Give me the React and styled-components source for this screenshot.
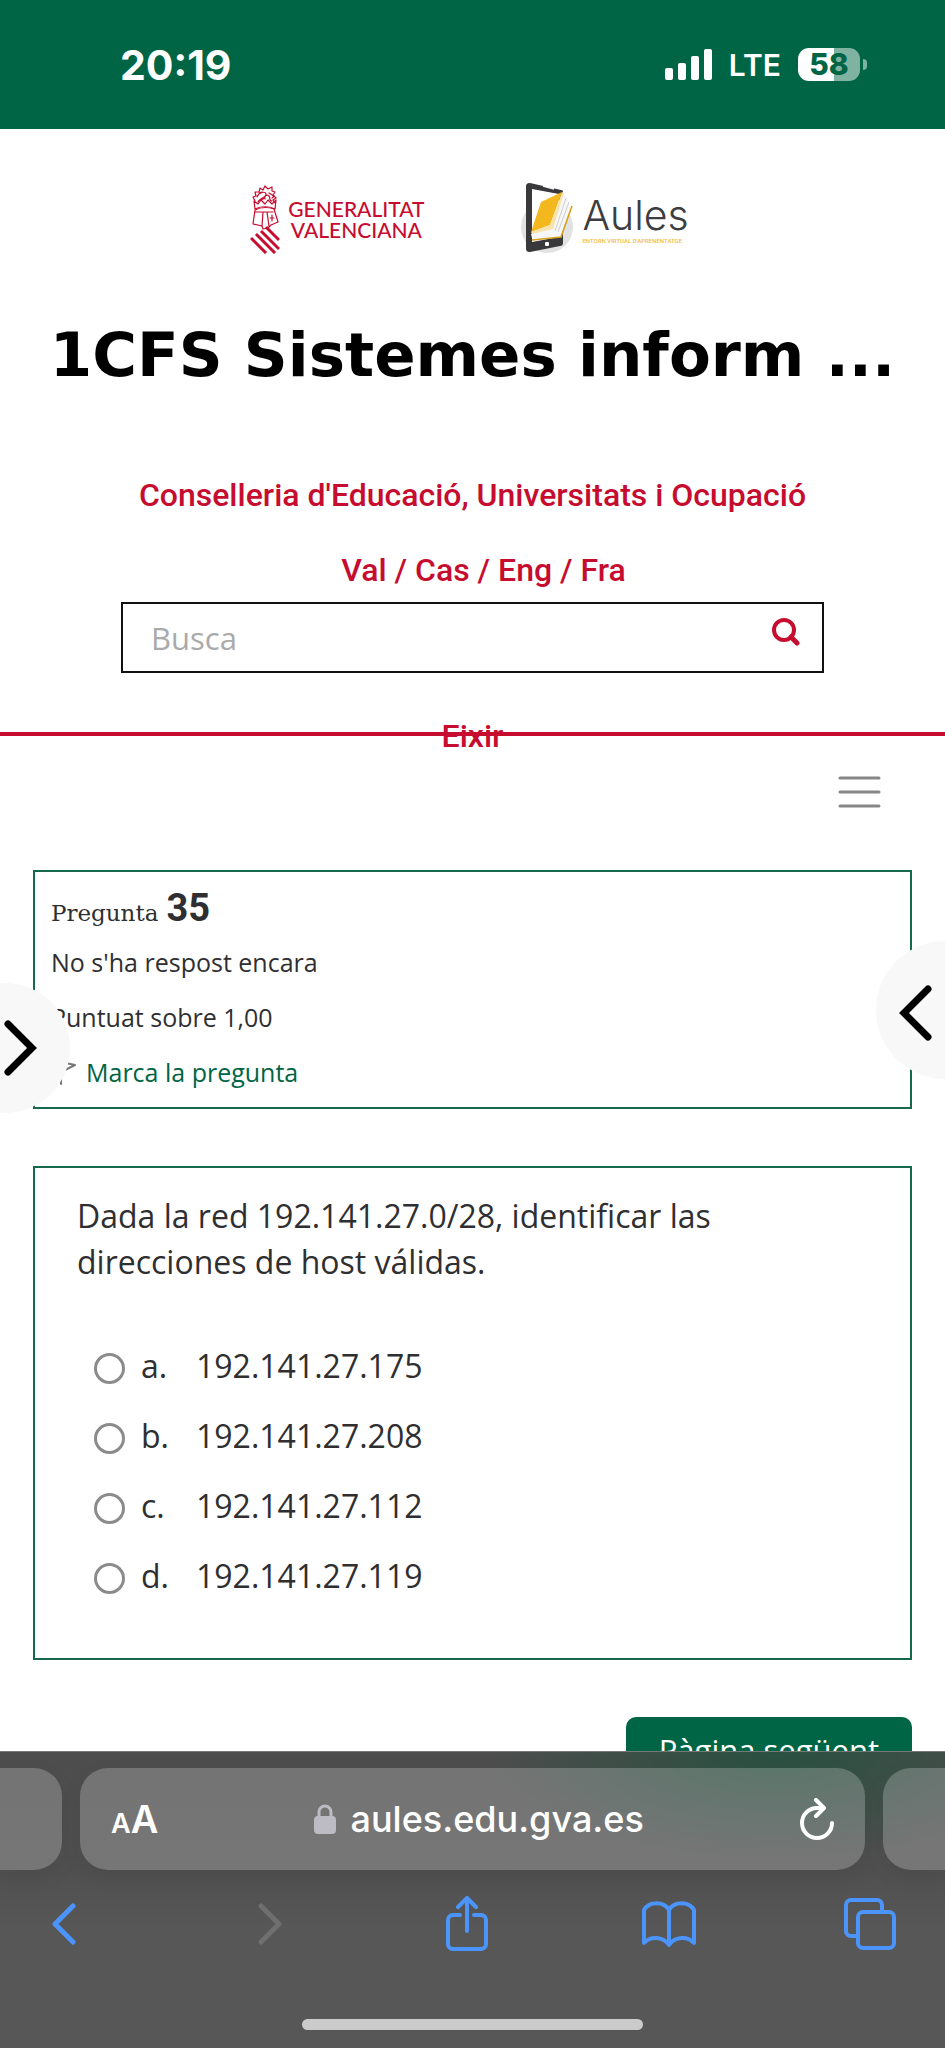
import React from "react";
import styled, { createGlobalStyle } from "styled-components";

const green = "#006544";
const red = "#c60c2f";

const GlobalStyle = createGlobalStyle`
  * { box-sizing: border-box; }
  body { margin: 0; background: #fff; font-family: "Open Sans", sans-serif; color: #2f2f31; }
  h1, h2, p, ul, ol, fieldset { margin: 0; padding: 0; }
  button, input { font: inherit; color: inherit; }
  button { border: 0; background: none; padding: 0; cursor: pointer; }
  a { color: inherit; text-decoration: none; }
  svg { display: block; flex: none; }
`;

const Screen = styled.div`
  display: flex;
  flex-direction: column;
  height: 100vh;
  overflow: hidden;
`;

const StatusBar = styled.header`
  display: flex;
  justify-content: space-between;
  align-items: center;
  flex: none;
  height: 129px;
  padding: 0 78px 0 120px;
  background: ${green};
  color: #fff;
  font-family: Inter, sans-serif;
`;

const Clock = styled.time`
  font-size: 41px;
  font-weight: 700;
`;

const StatusItems = styled.div`
  display: flex;
  align-items: center;
  gap: 17px;
`;

const Network = styled.span`
  font-size: 30px;
  font-weight: 600;
`;

const Battery = styled.div`
  display: flex;
  align-items: center;
  gap: 3px;
`;

const BatteryBody = styled.span`
  width: 62px;
  height: 33px;
  border-radius: 11px;
  background: linear-gradient(to right, #fff 58%, #80b2a1 58%);
  color: ${green};
  font-size: 30px;
  font-weight: 800;
  line-height: 33px;
  text-align: center;
`;

const BatteryTip = styled.span`
  width: 4px;
  height: 11px;
  border-radius: 0 6px 6px 0;
  background: #80b2a1;
`;

const Page = styled.div`
  position: relative;
  flex: 1;
  min-height: 0;
  overflow: hidden;
`;

const SiteHeader = styled.div`
  display: flex;
  flex-direction: column;
  align-items: center;
  padding-top: 52px;
  border-bottom: 4px solid ${red};
  color: ${red};
  font-family: Roboto, sans-serif;
  font-size: 32px;
  font-weight: 500;
  line-height: 40px;
`;

const Logos = styled.div`
  display: flex;
  align-items: center;
  gap: 96px;
  height: 76px;
  padding-right: 6px;
`;

const Logo = styled.a`
  display: flex;
  align-items: center;
  gap: 8px;
`;

const GvaName = styled.span`
  font-family: Lato, sans-serif;
  font-size: 21px;
  line-height: 21px;
  text-align: center;
`;

const AulesName = styled.span`
  display: flex;
  flex-direction: column;
  color: #3d3d3f;
  font-family: Inter, sans-serif;
  font-size: 41px;
  font-weight: 300;
  line-height: 44px;
`;

const AulesTagline = styled.small`
  color: #f0bd45;
  font-family: Roboto, sans-serif;
  font-size: 6px;
  font-weight: 500;
  line-height: 8px;
`;

const CourseTitle = styled.h1`
  margin-top: 58px;
  color: #000;
  font-family: "DejaVu Sans", sans-serif;
  font-size: 61px;
  font-weight: 700;
  line-height: 80px;
  white-space: nowrap;
`;

const Department = styled.a`
  margin-top: 80px;
`;

const Languages = styled.nav`
  margin-top: 35px;
  padding-left: 22px;
`;

const SearchForm = styled.form`
  display: flex;
  align-items: center;
  width: calc(100% - 242px);
  height: 71px;
  margin-top: 12px;
  padding: 0 22px 0 26px;
  border: 2px solid #111;
`;

const SearchInput = styled.input`
  flex: 1;
  min-width: 0;
  border: 0;
  outline: 0;
  background: none;
  font-family: "Open Sans", sans-serif;
  font-size: 31px;
  font-weight: 400;
  &::placeholder { color: #aaa; opacity: 1; }
`;

const SearchButton = styled.button`
  align-self: flex-start;
  padding-top: 14px;
`;

const Logout = styled.a`
  margin: 43px 0 -24px;
`;

const MenuRow = styled.div`
  display: flex;
  justify-content: flex-end;
  height: 134px;
  padding: 40px 64px 0;
`;

const MenuButton = styled.button`
  align-self: flex-start;
`;

const Main = styled.main`
  padding: 0 33px;
`;

const Card = styled.section`
  border: 2px solid #17694b;
`;

const QuestionInfo = styled(Card)`
  padding: 9px 16px 7px;
  font-size: 25px;
  line-height: 55px;
`;

const QuestionHeading = styled.h2`
  display: flex;
  align-items: baseline;
  gap: 8px;
  height: 54px;
  font-family: "DejaVu Serif", serif;
  font-size: 23px;
  font-weight: 400;
  line-height: 54px;
`;

const QuestionNumber = styled.strong`
  font-family: Roboto, sans-serif;
  font-size: 38px;
  font-weight: 700;
`;

const FlagButton = styled.button`
  display: flex;
  align-items: center;
  gap: 9px;
  color: ${green};
`;

const QuestionBody = styled(Card)`
  margin-top: 57px;
  padding: 25px 42px 48px;
  font-size: 32px;
`;

const QuestionText = styled.p`
  max-width: 700px;
  line-height: 46px;
`;

const Answers = styled.fieldset`
  margin-top: 45px;
  padding-left: 17px;
  border: 0;
`;

const Answer = styled.label`
  display: flex;
  align-items: center;
  height: 70px;
`;

const Radio = styled.input`
  appearance: none;
  width: 31px;
  height: 31px;
  margin: 7px 16px 0 0;
  border: 3px solid #8b8b8b;
  border-radius: 50%;
  background: #fff;
  &:checked { background: radial-gradient(${green} 45%, #fff 50%); }
`;

const Letter = styled.span`
  width: 55px;
`;

const NextRow = styled.div`
  display: flex;
  justify-content: flex-end;
  margin-top: 57px;
`;

const NextButton = styled.button`
  padding: 10px 33px;
  border-radius: 10px;
  background: ${green};
  color: #fff;
  font-size: 31px;
  line-height: 46px;
`;

const DrawerButton = styled.button`
  position: absolute;
  top: ${(p) => p.$top}px;
  ${(p) => p.$side}: ${(p) => p.$inset}px;
  display: flex;
  align-items: center;
  justify-content: ${(p) => (p.$side === "left" ? "flex-end" : "flex-start")};
  width: ${(p) => p.$size}px;
  height: ${(p) => p.$size}px;
  padding: ${(p) => (p.$side === "left" ? "0 32px" : "6px 22px 0")};
  border-radius: 50%;
  background: #f8f8f8;
`;

const BrowserBar = styled.footer`
  position: relative;
  flex: none;
  padding: 16px 0 18px;
  border-top: 1px solid #777;
  background:
    radial-gradient(ellipse 290px 110px at 82% 0, rgba(28, 82, 60, 0.75), rgba(28, 82, 60, 0.35) 50%, transparent),
    linear-gradient(#4d4d4d, #505050 40%, #575757 60%);
  color: #fff;
  font-family: Inter, sans-serif;
`;

const TabStrip = styled.div`
  display: flex;
  gap: 18px;
  height: 102px;
`;

const TabEdge = styled.div`
  width: 62px;
  border-radius: ${(p) => (p.$side === "left" ? "0 28px 28px 0" : "28px 0 0 28px")};
  background: rgba(255, 255, 255, 0.22);
  box-shadow: 0 8px 24px rgba(0, 0, 0, 0.06);
`;

const AddressBar = styled.div`
  display: flex;
  flex: 1;
  align-items: center;
  justify-content: space-between;
  padding: 0 30px 0 31px;
  border-radius: 28px;
  background: rgba(255, 255, 255, 0.22);
  box-shadow: 0 8px 24px rgba(0, 0, 0, 0.06);
`;

const TextSize = styled.button`
  color: #fff;
  font-size: 38px;
  font-weight: 600;
`;

const SmallA = styled.span`
  font-size: 27px;
`;

const Address = styled.a`
  display: flex;
  align-items: center;
  gap: 15px;
  font-size: 36px;
  font-weight: 500;
`;

const Toolbar = styled.nav`
  display: flex;
  justify-content: space-between;
  align-items: center;
  height: 108px;
  padding: 0 45px 0 34px;
`;

const ToolButton = styled.button`
  display: flex;
  align-items: center;
  justify-content: center;
  width: 60px;
  height: 60px;
  color: ${(p) => (p.disabled ? "#6f6f6f" : "#4a94fb")};
`;

const HomeIndicator = styled.div`
  width: 36%;
  height: 11px;
  margin: 41px auto 0;
  border-radius: 6px;
  background: #cbcbcb;
`;

const Stroke = ({ w, h, sw = 4, children, color = "currentColor" }) => (
  <svg width={w} height={h} viewBox={`0 0 ${w} ${h}`} fill="none" stroke={color} strokeWidth={sw} strokeLinecap="round" strokeLinejoin="round" aria-hidden="true">
    {children}
  </svg>
);

const Signal = () => (
  <svg width="47" height="31" viewBox="0 0 47 31" fill="#fff" aria-hidden="true">
    <rect x="0" y="19" width="8" height="12" rx="2" />
    <rect x="13" y="14" width="8" height="17" rx="2" />
    <rect x="26" y="7" width="8" height="24" rx="2" />
    <rect x="39" y="0" width="8" height="31" rx="2" />
  </svg>
);

const Crest = () => (
  <svg width="30" height="70" viewBox="0 0 30 70" fill="none" stroke={red} strokeWidth="1.2" strokeLinejoin="round" strokeLinecap="round" aria-hidden="true">
    <path d="M5 17 3 13l3-1-1-4 4 0 1-4 3 2 2-4 3 3 4-2 0 4 3 1-2 3 3 3-3 2 2 3" />
    <path d="M7 13c2-5 8-6 9-3s-6 4-8 8M12 8l-3 1M15 15c-1-3 2-5 4-3s-1 4 3 5M19 9l5 3-2 2M11 16l4-2" />
    <path d="M4 17l4 3 3-4 4 4 3-4 4 4 4-4-1 9c-6-3-14-3-20 0z" />
    <path d="M5 26l-2 14 9 2 1 3 5-1 3-3 7-3-4-13c-6-2-13-2-19 1z" />
    <path d="M5 28h18M13 28l-1 14M17 28l2 14M20 34h4M22 31v6" />
    <g strokeWidth="3" strokeLinecap="butt">
      <path d="M1 54l15 15M6 50l19 19M11 47l18 18M16 43l13 13" />
    </g>
  </svg>
);

const AulesMark = () => (
  <svg width="54" height="74" viewBox="0 0 54 74" aria-hidden="true">
    <circle cx="27" cy="45" r="26" fill="#e2e2e3" />
    <path d="M10 1l31 7c2 0 2 1 2 3v50c0 2-1 3-3 3L10 70c-3 0-4-1-4-4V5c0-3 1-4 4-4z" fill="#39393b" />
    <path d="M12 7l27 5v43l-27 5z" fill="#fff" />
    <path d="M23 4l11 3" stroke="#fff" strokeWidth="1.5" />
    <path d="M43 10l8 13-10 32-29 1-1-4 20-8z" fill="#f7f7f7" />
    <path d="M21 20l21-10-12 33-19 7z" fill="#f4b81f" />
    <path d="M42 10l2 1-11 36-21 5-1-2 19-7z" fill="#f8e3ad" />
    <path d="M46 16l-11 33M49 20L38 50" stroke="#cfcfd1" strokeWidth="1" fill="none" />
    <path d="M52 24L41 55l-29 3" stroke="#d7a11d" strokeWidth="1.6" fill="none" />
    <rect x="25" y="60" width="4" height="4" rx="1" fill="#fff" />
  </svg>
);

const answers = [
  ["a.", "192.141.27.175"],
  ["b.", "192.141.27.208"],
  ["c.", "192.141.27.112"],
  ["d.", "192.141.27.119"],
];

export default function App() {
  return (
    <Screen>
      <GlobalStyle />
      <StatusBar>
        <Clock>20:19</Clock>
        <StatusItems>
          <Signal />
          <Network>LTE</Network>
          <Battery>
            <BatteryBody>58</BatteryBody>
            <BatteryTip />
          </Battery>
        </StatusItems>
      </StatusBar>

      <Page>
        <SiteHeader>
          <Logos>
            <Logo href="#gva">
              <Crest />
              <GvaName>GENERALITAT<br />VALENCIANA</GvaName>
            </Logo>
            <Logo href="#aules">
              <AulesMark />
              <AulesName>
                Aules
                <AulesTagline>ENTORN VIRTUAL D'APRENENTATGE</AulesTagline>
              </AulesName>
            </Logo>
          </Logos>
          <CourseTitle>1CFS Sistemes inform ...</CourseTitle>
          <Department href="#conselleria">Conselleria d'Educació, Universitats i Ocupació</Department>
          <Languages>
            <a href="#val">Val</a> / <a href="#cas">Cas</a> / <a href="#eng">Eng</a> / <a href="#fra">Fra</a>
          </Languages>
          <SearchForm onSubmit={(e) => e.preventDefault()}>
            <SearchInput type="search" placeholder="Busca" aria-label="Busca" />
            <SearchButton aria-label="Busca">
              <Stroke w={28} h={28} color={red}>
                <circle cx="12" cy="12" r="10" />
                <path d="M19 19l6 6" strokeWidth="5" />
              </Stroke>
            </SearchButton>
          </SearchForm>
          <Logout href="#eixir">Eixir</Logout>
        </SiteHeader>

        <MenuRow>
          <MenuButton aria-label="Menú">
            <Stroke w={43} h={32} sw={3} color="#868686">
              <path d="M2 2h39M2 16h39M2 30h39" />
            </Stroke>
          </MenuButton>
        </MenuRow>

        <Main>
          <QuestionInfo>
            <QuestionHeading>
              Pregunta <QuestionNumber>35</QuestionNumber>
            </QuestionHeading>
            <p>No s'ha respost encara</p>
            <p>Puntuat sobre 1,00</p>
            <FlagButton>
              <Stroke w={26} h={26} sw={2} color="#777">
                <path d="M10 2v22M10 2l14 3-14 7" />
              </Stroke>
              Marca la pregunta
            </FlagButton>
          </QuestionInfo>

          <QuestionBody>
            <QuestionText>Dada la red 192.141.27.0/28, identificar las direcciones de host válidas.</QuestionText>
            <Answers>
              {answers.map(([letter, value]) => (
                <Answer key={letter}>
                  <Radio type="radio" name="answer" value={value} />
                  <Letter>{letter}</Letter>
                  {value}
                </Answer>
              ))}
            </Answers>
          </QuestionBody>

          <NextRow>
            <NextButton>Pàgina següent</NextButton>
          </NextRow>
        </Main>

        <DrawerButton $side="left" $top={854} $inset={-60} $size={130} aria-label="Obre el calaix esquerre">
          <Stroke w={34} h={56} sw={7} color="#000">
            <path d="M4 4l24 24L4 52" strokeLinejoin="miter" />
          </Stroke>
        </DrawerButton>
        <DrawerButton $side="right" $top={812} $inset={-69} $size={138} aria-label="Obre el calaix dret">
          <Stroke w={34} h={56} sw={7} color="#000">
            <path d="M30 4L6 28l24 24" strokeLinejoin="miter" />
          </Stroke>
        </DrawerButton>
      </Page>

      <BrowserBar>
        <TabStrip>
          <TabEdge $side="left" />
          <AddressBar>
            <TextSize aria-label="Mida del text"><SmallA>A</SmallA>A</TextSize>
            <Address href="#adreca">
              <svg width="22" height="31" viewBox="0 0 22 31" aria-hidden="true">
                <path d="M5 14V8a6 6 0 0 1 12 0v6" fill="none" stroke="#bdbcc4" strokeWidth="3" />
                <rect y="12" width="22" height="18" rx="4" fill="#bdbcc4" />
              </svg>
              aules.edu.gva.es
            </Address>
            <button aria-label="Actualitza">
              <Stroke w={36} h={42} color="#fff">
                <path d="M33 25a15 15 0 1 1-15-15h6M17 2l8 8-8 8" />
              </Stroke>
            </button>
          </AddressBar>
          <TabEdge $side="right" />
        </TabStrip>
        <Toolbar>
          <ToolButton aria-label="Arrere">
            <Stroke w={26} h={42} sw={5}><path d="M22 3L4 21l18 18" /></Stroke>
          </ToolButton>
          <ToolButton aria-label="Avant" disabled>
            <Stroke w={34} h={42} sw={5}><path d="M12 3l18 18-18 18" /></Stroke>
          </ToolButton>
          <ToolButton aria-label="Comparteix">
            <Stroke w={44} h={56}>
              <path d="M15 19H8a5 5 0 0 0-5 5v24a5 5 0 0 0 5 5h28a5 5 0 0 0 5-5V24a5 5 0 0 0-5-5h-7M22 35V3M13 11l9-9 9 9" />
            </Stroke>
          </ToolButton>
          <ToolButton aria-label="Adreces d'interés">
            <Stroke w={56} h={48}>
              <path d="M28 10C23 1 8 1 3 10v33c6-7 19-7 25 2 6-9 19-9 25-2V10C48 1 33 1 28 10zM28 10v34" />
            </Stroke>
          </ToolButton>
          <ToolButton aria-label="Pestanyes">
            <Stroke w={54} h={54}>
              <rect x="15" y="15" width="36" height="36" rx="5" />
              <path d="M14 39H8a5 5 0 0 1-5-5V8a5 5 0 0 1 5-5h26a5 5 0 0 1 5 5v6" />
            </Stroke>
          </ToolButton>
        </Toolbar>
        <HomeIndicator />
      </BrowserBar>
    </Screen>
  );
}
